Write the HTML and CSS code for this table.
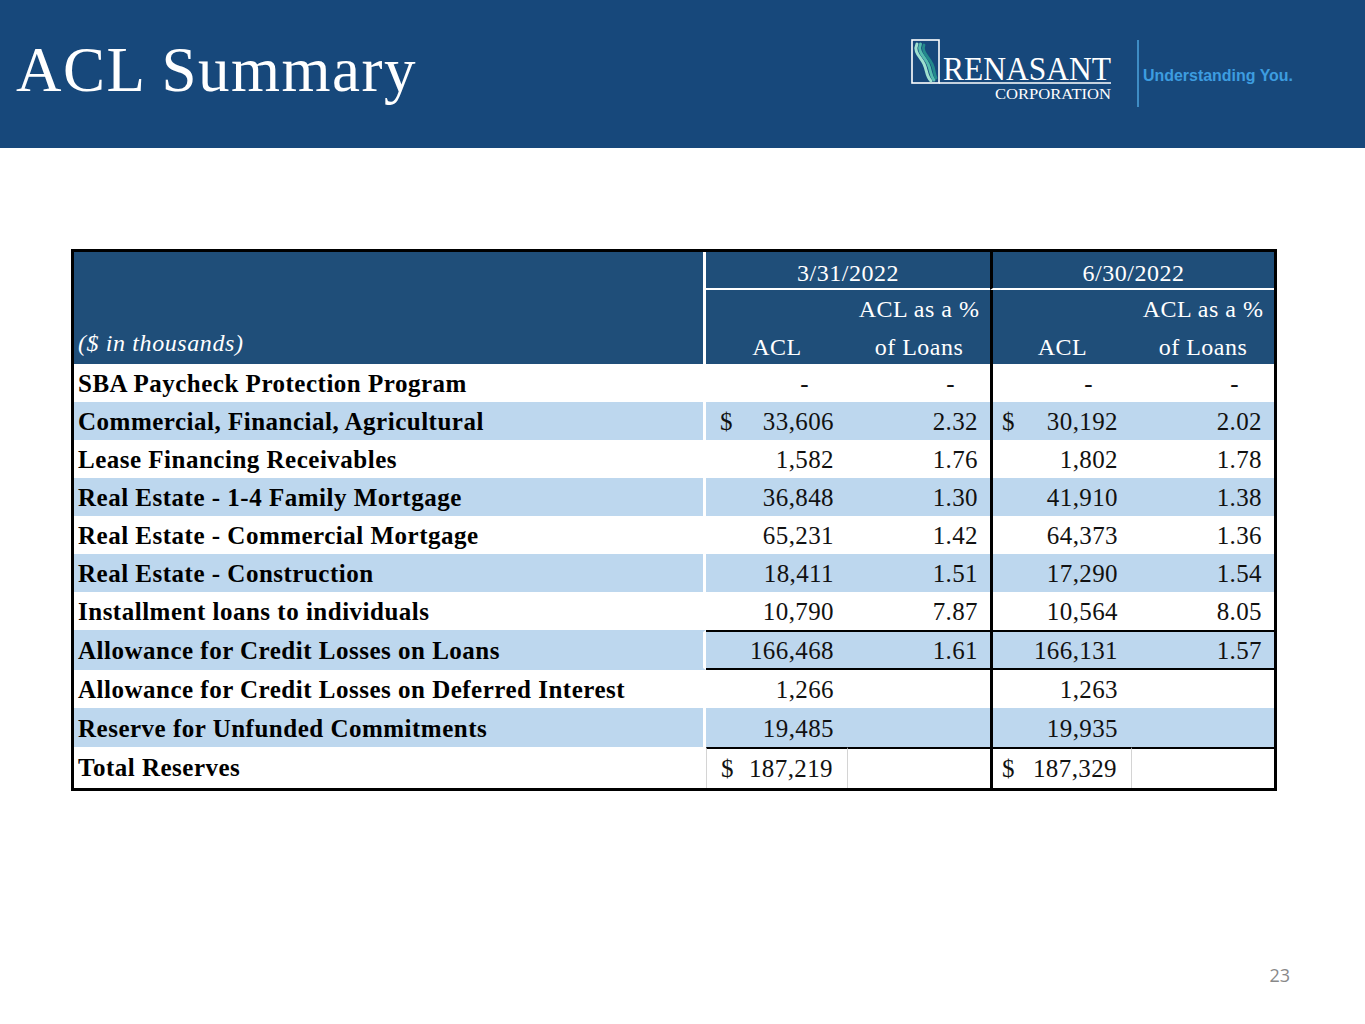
FILE: index.html
```html
<!DOCTYPE html>
<html lang="en">
<head>
<meta charset="utf-8">
<title>ACL Summary</title>
<link rel="stylesheet" href="styles.css">
</head>
<body>
<div class="slide">
  <header class="topbar">
    <h1 class="title">ACL Summary</h1>
    <svg class="logo" width="420" height="78" viewBox="0 0 420 78" xmlns="http://www.w3.org/2000/svg">
      <rect x="7" y="5" width="27" height="43" fill="none" stroke="#ffffff" stroke-width="1.6"/>
      <line x1="34" y1="48" x2="206" y2="48" stroke="#ffffff" stroke-width="1.4"/>
      <path d="M12 9 C8 17 16 22 19 29 C22 35 21 41 26 46" fill="none" stroke="#9fe0cf" stroke-width="3" stroke-linecap="round"/>
      <path d="M15.5 9 C12 17 20 22 23 29 C26 35 25 40 29 45" fill="none" stroke="#55bcae" stroke-width="3" stroke-linecap="round"/>
      <path d="M19 10 C16 17 24 22 27 29 C29.5 34 29 39 31 43" fill="none" stroke="#248a8c" stroke-width="2.8" stroke-linecap="round"/>
      <text x="38" y="45" class="logo-name" textLength="168" lengthAdjust="spacingAndGlyphs">RENASANT</text>
      <text x="90" y="64" class="logo-corp" textLength="116" lengthAdjust="spacingAndGlyphs">CORPORATION</text>
      <line x1="233" y1="5" x2="233" y2="72" stroke="#4a9fd8" stroke-width="1.6"/>
      <text x="238" y="46" class="logo-tag" textLength="150" lengthAdjust="spacingAndGlyphs">Understanding You.</text>
    </svg>
  </header>

  <main class="content">
    <table class="acl">
      <colgroup>
        <col class="c-label">
        <col class="c-num">
        <col class="c-num">
        <col class="c-num">
        <col class="c-num">
      </colgroup>
      <thead>
        <tr class="hr1">
          <th class="hlabel" rowspan="3">($ in thousands)</th>
          <th class="hdate" colspan="2">3/31/2022</th>
          <th class="hdate sep" colspan="2">6/30/2022</th>
        </tr>
        <tr class="hr2">
          <th></th>
          <th>ACL as a %</th>
          <th class="sep"></th>
          <th>ACL as a %</th>
        </tr>
        <tr class="hr3">
          <th>ACL</th>
          <th>of Loans</th>
          <th class="sep">ACL</th>
          <th>of Loans</th>
        </tr>
      </thead>
      <tbody>
        <tr>
          <td class="label">SBA Paycheck Protection Program</td>
          <td class="n1"><span class="dash">-</span></td>
          <td class="n2"><span class="dash">-</span></td>
          <td class="n1 sep"><span class="dash">-</span></td>
          <td class="n2"><span class="dash">-</span></td>
        </tr>
        <tr class="blue">
          <td class="label">Commercial, Financial, Agricultural</td>
          <td class="n1"><span class="cur">$</span><span>33,606</span></td>
          <td class="n2">2.32</td>
          <td class="n1 sep"><span class="cur">$</span><span>30,192</span></td>
          <td class="n2">2.02</td>
        </tr>
        <tr>
          <td class="label">Lease Financing Receivables</td>
          <td class="n1">1,582</td>
          <td class="n2">1.76</td>
          <td class="n1 sep">1,802</td>
          <td class="n2">1.78</td>
        </tr>
        <tr class="blue">
          <td class="label">Real Estate - 1-4 Family Mortgage</td>
          <td class="n1">36,848</td>
          <td class="n2">1.30</td>
          <td class="n1 sep">41,910</td>
          <td class="n2">1.38</td>
        </tr>
        <tr>
          <td class="label">Real Estate - Commercial Mortgage</td>
          <td class="n1">65,231</td>
          <td class="n2">1.42</td>
          <td class="n1 sep">64,373</td>
          <td class="n2">1.36</td>
        </tr>
        <tr class="blue">
          <td class="label">Real Estate - Construction</td>
          <td class="n1">18,411</td>
          <td class="n2">1.51</td>
          <td class="n1 sep">17,290</td>
          <td class="n2">1.54</td>
        </tr>
        <tr>
          <td class="label">Installment loans to individuals</td>
          <td class="n1">10,790</td>
          <td class="n2">7.87</td>
          <td class="n1 sep">10,564</td>
          <td class="n2">8.05</td>
        </tr>
        <tr class="blue subtotal">
          <td class="label">Allowance for Credit Losses on Loans</td>
          <td class="n1">166,468</td>
          <td class="n2">1.61</td>
          <td class="n1 sep">166,131</td>
          <td class="n2">1.57</td>
        </tr>
        <tr>
          <td class="label">Allowance for Credit Losses on Deferred Interest</td>
          <td class="n1">1,266</td>
          <td class="n2"></td>
          <td class="n1 sep">1,263</td>
          <td class="n2"></td>
        </tr>
        <tr class="blue reserve">
          <td class="label">Reserve for Unfunded Commitments</td>
          <td class="n1">19,485</td>
          <td class="n2"></td>
          <td class="n1 sep">19,935</td>
          <td class="n2"></td>
        </tr>
        <tr class="total">
          <td class="label">Total Reserves</td>
          <td class="n1"><span class="cur">$</span><span>187,219</span></td>
          <td class="n2"></td>
          <td class="n1 sep"><span class="cur">$</span><span>187,329</span></td>
          <td class="n2"></td>
        </tr>
      </tbody>
    </table>
  </main>

  <footer class="pagenum">23</footer>
</div>
</body>
</html>
```

FILE: styles.css
```css
html, body {
  margin: 0;
  padding: 0;
  background: #ffffff;
}

.slide {
  width: 1365px;
  height: 1024px;
  display: flex;
  flex-direction: column;
  background: #ffffff;
  overflow: hidden;
}

/* ---------- top bar ---------- */
.topbar {
  height: 148px;
  box-sizing: border-box;
  background: #17487b;
  display: flex;
  justify-content: space-between;
  align-items: flex-start;
  padding: 35px 40px 0 16px;
  flex-shrink: 0;
}

.title {
  margin: 0;
  padding-top: 4px;
  font-family: "Liberation Serif", "Times New Roman", serif;
  font-weight: normal;
  font-size: 63px;
  line-height: 62px;
  letter-spacing: 1.5px;
  color: #ffffff;
}

.logo {
  display: block;
}

.logo-name {
  font-family: "Liberation Serif", "Times New Roman", serif;
  font-size: 34px;
  fill: #ffffff;
}

.logo-corp {
  font-family: "Liberation Serif", "Times New Roman", serif;
  font-size: 14px;
  fill: #ffffff;
}

.logo-tag {
  font-family: "Liberation Sans", Arial, sans-serif;
  font-weight: bold;
  font-size: 17px;
  fill: #3d9de0;
}

/* ---------- content ---------- */
.content {
  flex: 1;
  padding: 101px 0 0 71px;
}

.acl {
  width: 1206px;
  table-layout: fixed;
  border-collapse: separate;
  border-spacing: 0;
  border: 3px solid #000000;
  font-family: "Liberation Serif", "Times New Roman", serif;
  font-size: 25px;
  color: #111111;
}

.c-label { width: 632px; }
.c-num { width: 142px; }

.acl th,
.acl td {
  padding: 0;
  overflow: hidden;
  white-space: nowrap;
}

/* header */
.acl thead th {
  background: #1f4e79;
  color: #ffffff;
  font-weight: normal;
  font-size: 24px;
  text-align: center;
  letter-spacing: 0.5px;
}

.acl thead th.hlabel {
  text-align: left;
  vertical-align: bottom;
  font-style: italic;
  padding: 0 0 4px 4px;
  line-height: 34px;
  border-right: 3px solid #ffffff;
  letter-spacing: 0.6px;
}

.hr1 th.hdate {
  height: 30px;
  line-height: 30px;
  padding-top: 6px;
  border-bottom: 2px solid #ffffff;
}

.hr2 th {
  height: 33px;
  line-height: 33px;
  padding-top: 3px;
}

.hr3 th {
  height: 34px;
  line-height: 34px;
  padding-top: 4px;
}

.acl .sep {
  border-left: 3px solid #000000;
}

/* body */
.acl tbody td {
  height: 36px;
  line-height: 36px;
  padding-top: 2px;
  letter-spacing: 0.4px;
}

.acl tbody td.label {
  font-weight: bold;
  padding-left: 4px;
  border-right: 3px solid #ffffff;
  color: #000000;
  letter-spacing: 0.5px;
}

.acl td.n1 {
  text-align: right;
  padding-right: 14px;
}

.acl td.n2 {
  text-align: right;
  padding-right: 12px;
}

.acl td .cur {
  float: left;
  padding-left: 14px;
}

.acl td.sep .cur {
  padding-left: 9px;
}

.acl td.n1 .dash {
  padding-right: 25px;
}

.acl td.n2 .dash {
  padding-right: 23px;
}

.acl tr.blue td {
  background: #bdd7ee;
}

.acl tr.subtotal td {
  height: 34px;
  line-height: 34px;
  border-top: 2px solid transparent;
  border-bottom: 2px solid transparent;
}

.acl tr.subtotal td.n1,
.acl tr.subtotal td.n2 {
  border-top-color: #000000;
  border-bottom-color: #000000;
}

.acl tr.reserve td {
  height: 37px;
}

.acl tr.total td {
  height: 38px;
  line-height: 38px;
  padding-top: 1px;
}

.acl tr.total td.n1,
.acl tr.total td.n2 {
  border-top: 2px solid #000000;
  height: 37px;
}

.acl tr.total td.n1 {
  border-right: 1.5px solid #d4d4d4;
  border-left: 1.5px solid #d4d4d4;
}

.acl tr.total td.n1.sep {
  border-left: 3px solid #000000;
}

/* footer */
.pagenum {
  flex-shrink: 0;
  text-align: right;
  padding: 0 75px 39px 0;
  font-family: "Open Sans", "Liberation Sans", sans-serif;
  font-size: 18px;
  line-height: 20px;
  color: #898989;
}
```
